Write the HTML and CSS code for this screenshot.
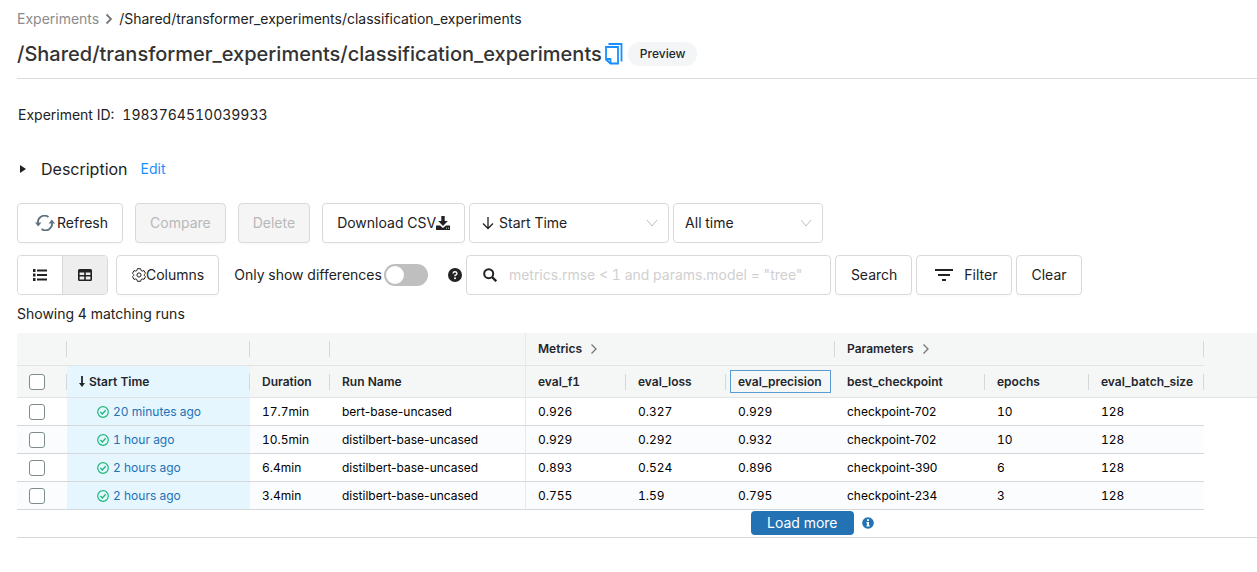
FILE: index.html
```html
<!DOCTYPE html>
<html lang="en">
<head>
<meta charset="utf-8">
<meta name="viewport" content="width=device-width, initial-scale=1">
<title>classification_experiments</title>
<link rel="stylesheet" href="styles.css">
</head>
<body>
<svg class="sprite" aria-hidden="true">
  <symbol id="chevron-right" viewBox="0 0 8 12"><path d="M1.5 1.5 6 6 1.5 10.5" fill="none" stroke="currentColor" stroke-width="1.3"/></symbol>
  <symbol id="chevron-down" viewBox="0 0 12 8"><path d="M1 1 6 7 11 1" fill="none" stroke="currentColor" stroke-width="1"/></symbol>
  <symbol id="check-circle" viewBox="0 0 12 12"><circle cx="6" cy="6" r="5.3" fill="none" stroke="currentColor" stroke-width="1.2"/><path d="M3.4 6 5.3 7.9 8.7 4.3" fill="none" stroke="currentColor" stroke-width="1.4"/></symbol>
</svg>
<main class="page">
  <nav class="breadcrumb" aria-label="Breadcrumb">
    <a href="#">Experiments</a>
    <svg class="crumb-chevron" width="8" height="12" viewBox="0 0 8 12"><path d="M1.5 1.5 6 6 1.5 10.5" fill="none" stroke="currentColor" stroke-width="1.8"/></svg>
    <span>/Shared/transformer_experiments/classification_experiments</span>
  </nav>
  <header class="title-bar">
    <h1>/Shared/transformer_experiments/classification_experiments</h1>
    <button class="icon-button" aria-label="Copy path">
      <svg width="18" height="22" viewBox="0 0 18 22" fill="none" stroke="#1890ff" stroke-width="1.8"><path d="M3.5 1H16.5V18.5"/><path d="M1 4H13V20.5H5.5L1 16.5Z"/><path d="M1.3 16H5.5V20.5"/></svg>
    </button>
    <span class="badge">Preview</span>
  </header>
  <p class="experiment-id"><span>Experiment ID:</span><span>1983764510039933</span></p>
  <section class="description">
    <svg width="6" height="8" viewBox="0 0 6 8"><path d="M0 0 6 4 0 8Z" fill="#222"/></svg>
    <h2>Description</h2>
    <a href="#">Edit</a>
  </section>

  <div class="toolbar">
    <div class="actions">
      <button class="button"><svg class="refresh-icon" width="20" height="16" viewBox="0 0 20 16" fill="none" stroke="#5f7281" stroke-width="1.8"><path d="M13.5 2A6.6 6.6 0 0 0 3.2 9"/><path d="M6.5 14A6.6 6.6 0 0 0 16.8 7"/><path d="M0 7.5H6.4L3.2 11.5ZM13.6 8.5H20L16.8 4.5Z" fill="#5f7281" stroke="none"/></svg>Refresh</button>
      <button class="button" disabled>Compare</button>
      <button class="button" disabled>Delete</button>
      <button class="button">Download CSV<svg width="14" height="14" viewBox="0 0 14 14" fill="#222"><path d="M5.3 0H8.7V5H11.8L7 10 2.2 5H5.3Z"/><path d="M0 9.5H4L7 12 10 9.5H14V14H0Z"/><path d="M10 12.2H11M12 12.2H13" stroke="#fff" stroke-width=".8"/></svg></button>
    </div>
    <label class="picker picker-sort">
      <svg class="picker-lead" width="12" height="14" viewBox="0 0 12 14" fill="none" stroke="#222" stroke-width="1.3"><path d="M6 1V12.5M1 7.5 6 12.5 11 7.5"/></svg>
      <select aria-label="Sort by"><option>Start Time</option></select>
      <svg class="picker-arrow" width="12" height="8"><use href="#chevron-down"/></svg>
    </label>
    <label class="picker picker-time">
      <select aria-label="Time range"><option>All time</option></select>
      <svg class="picker-arrow" width="12" height="8"><use href="#chevron-down"/></svg>
    </label>
  </div>

  <div class="toolbar">
    <div class="view-switch">
      <button aria-label="List view"><svg width="14" height="12" viewBox="0 0 14 12" fill="#222"><path d="M0 0H2.5V3H0ZM4 .5H14V2.5H4ZM0 4.5H2.5V7.5H0ZM4 5H14V7H4ZM0 9H2.5V12H0ZM4 9.5H14V11.5H4Z"/></svg></button>
      <button class="selected" aria-label="Table view"><svg width="14" height="12" viewBox="0 0 14 12" fill="#222" fill-rule="evenodd"><path d="M1.5 0H12.5Q14 0 14 1.5V10.5Q14 12 12.5 12H1.5Q0 12 0 10.5V1.5Q0 0 1.5 0ZM1.6 3.4V6H6.2V3.4ZM7.8 3.4V6H12.4V3.4ZM1.6 7.6V10.4H6.2V7.6ZM7.8 7.6V10.4H12.4V7.6Z"/></svg></button>
    </div>
    <button class="button columns-button"><svg width="14" height="14" viewBox="0 0 14 14" fill="none" stroke="#222"><path d="M5.4 .7H8.6L9.1 2.5 10.2 3.1 12 2.6 13.5 5.3 12.2 6.6V7.4L13.5 8.7 12 11.4 10.2 10.9 9.1 11.5 8.6 13.3H5.4L4.9 11.5 3.8 10.9 2 11.4 .5 8.7 1.8 7.4V6.6L.5 5.3 2 2.6 3.8 3.1 4.9 2.5Z"/><circle cx="7" cy="7" r="2.1"/></svg>Columns</button>
    <label class="differences">Only show differences<input type="checkbox" role="switch"></label>
    <svg class="help" width="14" height="14" viewBox="0 0 14 14"><circle cx="7" cy="7" r="7" fill="#222"/><path d="M5 5.5Q5.2 3.8 7 3.8T9 5.5Q9 6.6 7 7.4V8.3" fill="none" stroke="#fff" stroke-width="1.4"/><circle cx="7" cy="10.2" r="1" fill="#fff"/></svg>
    <div class="search">
      <label class="search-box">
        <svg width="14" height="14" viewBox="0 0 14 14" fill="none" stroke="#222" stroke-width="2"><circle cx="5.7" cy="5.7" r="4.5"/><path d="M9 9 13.2 13.2" stroke-width="2.4"/></svg>
        <input type="text" aria-label="Search runs" placeholder='metrics.rmse &lt; 1 and params.model = "tree"'>
      </label>
      <button class="button search-button">Search</button>
      <button class="button filter-button"><svg width="18" height="12" viewBox="0 0 18 12" fill="#222"><path d="M0 0H18V2H0ZM3 5H15V7H3ZM7 10H11V12H7Z"/></svg>Filter</button>
      <button class="button">Clear</button>
    </div>
  </div>

  <p class="summary">Showing 4 matching runs</p>

  <table class="runs">
    <colgroup><col class="w-check"><col class="w-start"><col class="w-duration"><col class="w-name"><col class="w-metric"><col class="w-metric"><col class="w-precision"><col class="w-checkpoint"><col class="w-epochs"><col class="w-batch"><col></colgroup>
    <thead>
      <tr>
        <th class="tick"></th><th class="tick"></th><th class="tick"></th><th class="edge"></th>
        <th class="tick" colspan="3">Metrics <svg width="8" height="12"><use href="#chevron-right"/></svg></th>
        <th class="tick" colspan="3">Parameters <svg width="8" height="12"><use href="#chevron-right"/></svg></th>
        <th class="rest"></th>
      </tr>
      <tr>
        <th class="check tick"><input type="checkbox" aria-label="Select all runs"></th>
        <th class="start tick"><svg width="6" height="11" viewBox="0 0 6 11"><path d="M2.1 0H3.9V7H6L3 11 0 7H2.1Z" fill="#1f272d"/></svg>Start Time</th>
        <th class="tick">Duration</th><th class="edge">Run Name</th><th class="tick">eval_f1</th><th class="tick">eval_loss</th>
        <th class="focused"><span>eval_precision</span></th><th class="tick">best_checkpoint</th><th class="tick">epochs</th><th class="tick">eval_batch_size</th><th></th>
      </tr>
    </thead>
    <tbody>
      <tr><td class="check"><input type="checkbox" aria-label="Select run 1"></td><td class="start"><svg width="12" height="12"><use href="#check-circle"/></svg><a href="#">20 minutes ago</a></td><td>17.7min</td><td class="edge name">bert-base-uncased</td><td>0.926</td><td>0.327</td><td>0.929</td><td class="name">checkpoint-702</td><td>10</td><td>128</td><td class="rest"></td></tr>
      <tr><td class="check"><input type="checkbox" aria-label="Select run 2"></td><td class="start"><svg width="12" height="12"><use href="#check-circle"/></svg><a href="#">1 hour ago</a></td><td>10.5min</td><td class="edge name">distilbert-base-uncased</td><td>0.929</td><td>0.292</td><td>0.932</td><td class="name">checkpoint-702</td><td>10</td><td>128</td><td class="rest"></td></tr>
      <tr><td class="check"><input type="checkbox" aria-label="Select run 3"></td><td class="start"><svg width="12" height="12"><use href="#check-circle"/></svg><a href="#">2 hours ago</a></td><td>6.4min</td><td class="edge name">distilbert-base-uncased</td><td>0.893</td><td>0.524</td><td>0.896</td><td class="name">checkpoint-390</td><td>6</td><td>128</td><td class="rest"></td></tr>
      <tr><td class="check"><input type="checkbox" aria-label="Select run 4"></td><td class="start"><svg width="12" height="12"><use href="#check-circle"/></svg><a href="#">2 hours ago</a></td><td>3.4min</td><td class="edge name">distilbert-base-uncased</td><td>0.755</td><td>1.59</td><td>0.795</td><td class="name">checkpoint-234</td><td>3</td><td>128</td><td class="rest"></td></tr>
    </tbody>
  </table>
  <div class="load-row">
    <button class="load-more">Load more</button>
    <svg width="12" height="12" viewBox="0 0 12 12"><circle cx="6" cy="6" r="5.8" fill="#2272b4"/><path d="M5 2.2H7V4H5ZM4.4 5H7V8.2H7.7V9.4H4.4V8.2H5.1V6.2H4.4Z" fill="#fff"/></svg>
  </div>
</main>
</body>
</html>
```
FILE: styles.css
```css
* { box-sizing: border-box; }
body { margin: 0; background: #fff; color: #222; font: 14px/20px Inter, "Liberation Sans", sans-serif; font-variant-numeric: tabular-nums; }
h1, h2, p { margin: 0; }
a { color: #1890ff; text-decoration: none; }
svg { flex: none; }
button, input, select { font: inherit; color: inherit; margin: 0; }
.sprite { display: none; }
.page { padding: 9px 0 0 17px; }

.breadcrumb { display: flex; align-items: center; gap: 6px; }
.breadcrumb a { color: #8c8c8c; }
.crumb-chevron { color: #777; }
.title-bar { display: flex; align-items: center; height: 50px; border-bottom: 1px solid #dcdcdc; }
h1 { font-size: 20px; line-height: 28px; font-weight: 500; color: #333; }
.icon-button { display: flex; padding: 0; margin: 0 5px 0 3px; border: 0; background: none; }
.badge { padding: 2px 12px; border-radius: 12px; background: #f3f5f6; color: #1f272d; font-size: 12px; font-weight: 500; }
.experiment-id { display: flex; gap: 8px; margin-top: 26px; padding-left: 1px; }
.description { display: flex; align-items: center; margin: 32px 0 22px; padding-left: 3px; height: 24px; }
h2 { margin: 0 13px 0 15px; font-size: 16px; font-weight: 400; }

.toolbar { display: flex; align-items: center; gap: 4px; margin-bottom: 12px; }
.actions { display: flex; gap: 12px; }
.button { display: flex; align-items: center; justify-content: center; height: 40px; padding: 0 14px; border: 1px solid #d9d9d9; border-radius: 4px; background: #fff; box-shadow: 0 2px 0 #00000004; white-space: nowrap; }
.button:disabled { background: #f5f5f5; color: #b8b8b8; }
.refresh-icon { margin: 0 2px 0 3px; }
.picker { display: grid; align-items: center; height: 40px; border: 1px solid #d9d9d9; border-radius: 4px; }
.picker > * { grid-area: 1 / 1; }
.picker select { width: 100%; height: 38px; padding: 0 11px; border: 0; background: none; appearance: none; }
.picker-sort { width: 200px; }
.picker-sort select { padding-left: 29px; }
.picker-time { width: 150px; }
.picker-lead { margin-left: 12px; }
.picker-arrow { justify-self: end; margin-right: 10px; color: #bfbfbf; }

.view-switch { display: flex; margin-right: 4px; border: 1px solid #d9d9d9; border-radius: 4px; overflow: hidden; }
.view-switch button { display: grid; place-items: center; width: 44px; height: 38px; padding: 0; border: 0; background: #fff; }
.view-switch .selected { width: 45px; border-left: 1px solid #d9d9d9; background: #eee; }
.columns-button, .search-button { padding: 0 14px 0 15px; }
.differences { display: flex; align-items: center; gap: 2px; margin: 0 16px 0 11px; white-space: nowrap; }
.differences input { appearance: none; display: flex; align-items: center; width: 44px; height: 22px; padding: 2px; border-radius: 11px; background: #bfbfbf; }
.differences input::before { content: ""; width: 18px; height: 18px; border-radius: 50%; background: #fff; }
.search { display: flex; gap: 4px; }
.search-box { display: flex; align-items: center; gap: 12px; width: 365px; height: 40px; padding: 0 16px; border: 1px solid #d9d9d9; border-radius: 4px; }
.search-box input { flex: 1; min-width: 0; padding: 0; border: 0; outline: 0; background: none; }
.search-box input::placeholder { color: #d0d0d0; opacity: 1; }
.filter-button { gap: 11px; padding-left: 18px; }
.summary { margin: -3px 0 9px; }

.runs { width: 100%; border-collapse: separate; border-spacing: 0; table-layout: fixed; font-size: 12px; line-height: 16px; color: #000; }
.runs th, .runs td { padding: 0 0 0 12px; text-align: left; white-space: nowrap; }
.runs th { height: 32px; border-bottom: 1px solid #e2e4e4; background-color: #f5f6f6; color: #1f272d; font-weight: 600; }
.runs thead tr:first-child th { height: 33px; }
.runs thead tr:first-child th:first-child { border-top-left-radius: 4px; }
.runs .tick { background-image: linear-gradient(#d5d8da, #d5d8da); background-repeat: no-repeat; background-position: right center; background-size: 1px 16px; }
.runs .edge { border-right: 1px solid #e6e8e9; }
.runs .name { font-variant-numeric: normal; }
.runs th svg { margin-left: 5px; vertical-align: -2px; color: #777; }
.runs td { height: 28px; border-bottom: 1px solid #d5d8da; }
.runs tbody tr:nth-child(even) td { background: #fbfcfe; }
.runs .start, .runs tbody tr:nth-child(even) .start { background-color: #e6f6ff; }
.runs th.start svg { margin: 0 4px 0 0; vertical-align: -1px; }
.runs td.start { padding-left: 30px; }
.runs td.start a { color: #2272b4; }
.runs td.start svg { margin-right: 4px; vertical-align: -2px; color: #1fb978; }
.runs thead .rest, .runs tbody .rest { border-bottom-color: transparent; }
.runs tbody tr:nth-child(even) .rest { background: none; }
.runs .check input { display: block; appearance: none; width: 16px; height: 16px; border: 1px solid #7f8c8d; border-radius: 3px; background: #fff; }
.runs .focused { padding-left: 4px; }
.focused span { display: block; width: 101px; padding: 2px 7px; border: 1px solid #5b9bd5; line-height: 17px; }
.w-check { width: 50px; }
.w-start { width: 183px; }
.w-duration { width: 80px; }
.w-name { width: 196px; }
.w-metric { width: 100px; }
.w-precision { width: 109px; }
.w-checkpoint { width: 150px; }
.w-epochs { width: 104px; }
.w-batch { width: 115px; }
.load-row { display: flex; align-items: center; gap: 8px; height: 28px; padding: 0 0 1px 734px; border-bottom: 1px solid #d5d8da; }
.load-more { height: 24px; padding: 0 16px; border: 0; border-radius: 4px; background: #2272b4; color: #fff; }
```
